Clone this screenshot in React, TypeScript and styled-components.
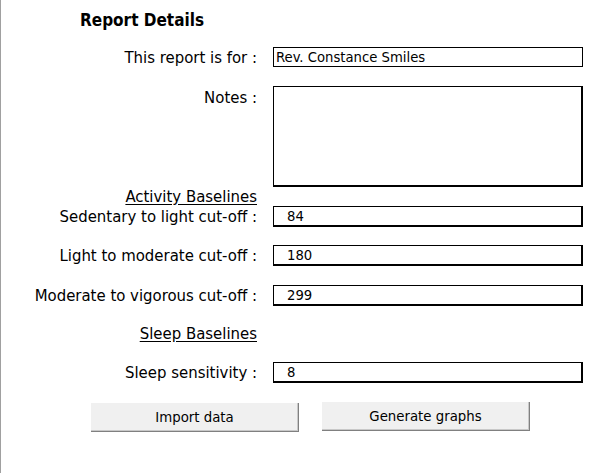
import React from "react";
import styled, { createGlobalStyle } from "styled-components";

const Global = createGlobalStyle`
  html, body { margin: 0; padding: 0; background: #fff; }
  body { font-family: "DejaVu Sans Condensed", "DejaVu Sans", Tahoma, sans-serif; color: #000; }
`;

const Page = styled.div`
  width: 607px;
  height: 473px;
  box-sizing: border-box;
  border-left: 1px solid #a0a0a0;
  padding-top: 10px;
  overflow: hidden;
`;

const Title = styled.h1`
  margin: 0 0 0 79px;
  height: 21px;
  font-size: 17px;
  font-weight: bold;
  line-height: 21px;
`;

const Row = styled.div<{ $top: number; $h: number; $align?: string }>`
  display: grid;
  grid-template-columns: 256px 310px;
  column-gap: 16px;
  margin-top: ${(p) => p.$top}px;
  height: ${(p) => p.$h}px;
  align-items: ${(p) => p.$align || "center"};
`;

const Label = styled.div<{ $pt?: number }>`
  text-align: right;
  font-size: 16.6px;
  line-height: 19px;
  white-space: nowrap;
  padding-top: ${(p) => p.$pt || 0}px;
  align-self: ${(p) => (p.$pt ? "start" : "center")};
`;

const Heading = styled.span`
  text-decoration: underline;
  text-underline-offset: 2px;
`;

const Field = styled.div<{ $heavy?: boolean; $pad?: number }>`
  box-sizing: border-box;
  height: 100%;
  border: 1px solid #000;
  border-right-width: ${(p) => (p.$heavy ? 2 : 1)}px;
  border-bottom-width: ${(p) => (p.$heavy ? 2 : 1)}px;
  padding-left: ${(p) => p.$pad ?? 2}px;
  font-size: 14.7px;
  line-height: 18px;
  display: flex;
  align-items: center;
`;

const NotesBox = styled(Field)`
  align-items: flex-start;
`;

const Buttons = styled.div`
  display: flex;
  gap: 23px;
  margin: 20px 0 0 90px;
  align-items: flex-start;
`;

const Button = styled.button<{ $dy?: number }>`
  box-sizing: border-box;
  width: 208px;
  height: 29px;
  margin-top: ${(p) => p.$dy || 0}px;
  background: #f0f0f0;
  border: none;
  border-right: 1px solid #808080;
  border-bottom: 1px solid #808080;
  box-shadow: inset -1px -1px 0 #c8c8c8;
  font-family: inherit;
  font-size: 14.8px;
  color: #000;
  padding: 0 0 2px 0;
`;

export default function App() {
  return (
    <>
      <Global />
      <Page>
        <Title>Report Details</Title>
        <Row $top={16} $h={20}>
          <Label>This report is for :</Label>
          <Field>Rev. Constance Smiles</Field>
        </Row>
        <Row $top={19} $h={101} $align="stretch">
          <Label $pt={2}>Notes :</Label>
          <NotesBox $heavy />
        </Row>
        <Row $top={0} $h={19} $align="end">
          <Label>
            <Heading>Activity Baselines</Heading>
          </Label>
          <div />
        </Row>
        <Row $top={0} $h={20}>
          <Label>Sedentary to light cut-off :</Label>
          <Field $heavy $pad={13}>84</Field>
        </Row>
        <Row $top={19} $h={20}>
          <Label>Light to moderate cut-off :</Label>
          <Field $heavy $pad={13}>180</Field>
        </Row>
        <Row $top={20} $h={20}>
          <Label>Moderate to vigorous cut-off :</Label>
          <Field $heavy $pad={13}>299</Field>
        </Row>
        <Row $top={18} $h={20}>
          <Label>
            <Heading>Sleep Baselines</Heading>
          </Label>
          <div />
        </Row>
        <Row $top={19} $h={20}>
          <Label>Sleep sensitivity :</Label>
          <Field $heavy $pad={13}>8</Field>
        </Row>
        <Buttons>
          <Button $dy={1}>Import data</Button>
          <Button>Generate graphs</Button>
        </Buttons>
      </Page>
    </>
  );
}
